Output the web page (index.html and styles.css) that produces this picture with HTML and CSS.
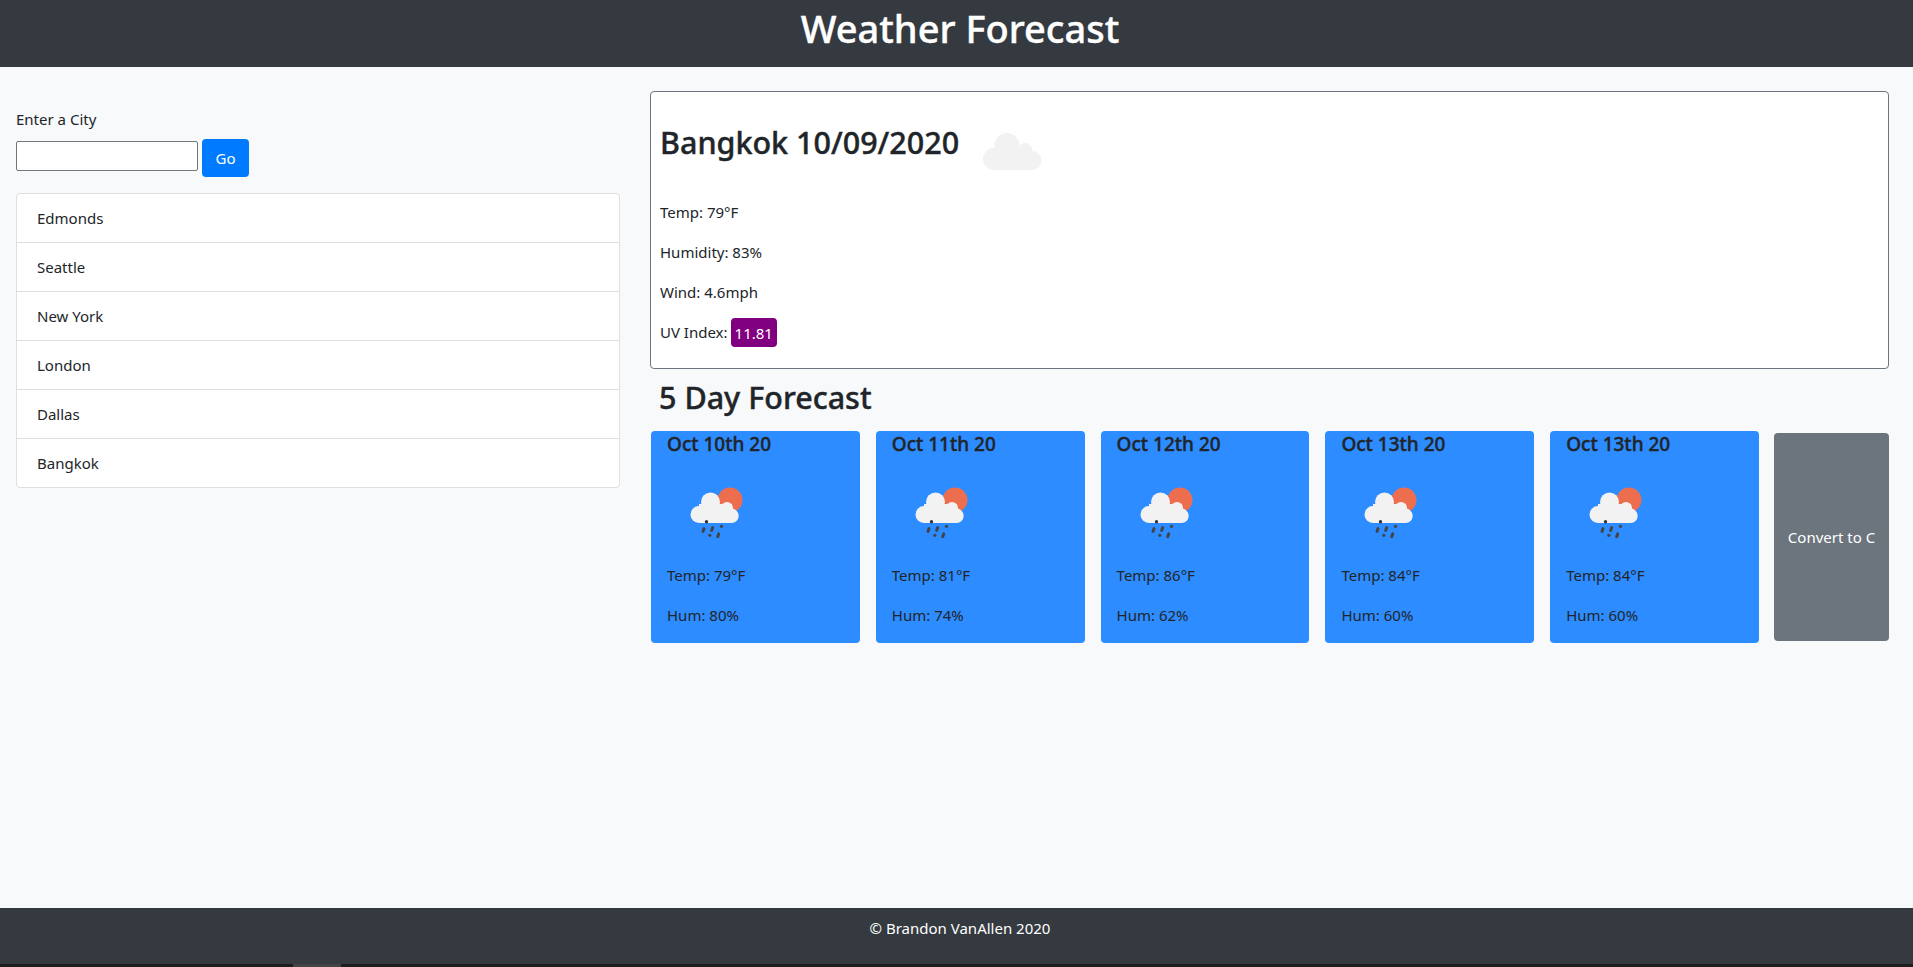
FILE: index.html
```html
<!DOCTYPE html>
<html>
<head>
<meta http-equiv="Content-Type" content="text/html; charset=utf-8"/>
<title>Weather Forecast</title>
<link rel="stylesheet" href="styles.css">
</head>
<body>
<svg class="defs" width="0" height="0">
  <symbol id="icon-rain" viewBox="0 0 100 100">
    <circle cx="63" cy="38" r="12.500" fill="#ed6e4f"/>
    <g fill="#f2f2f2">
      <circle cx="43.500" cy="40" r="9.500"/>
      <circle cx="60" cy="46" r="6"/>
      <circle cx="32" cy="52.500" r="8.500"/>
      <circle cx="64.500" cy="53.800" r="7.200"/>
      <rect x="32" y="42" width="33" height="19"/>
    </g>
    <g fill="#444">
      <circle cx="39.500" cy="59.700" r="1.700" fill="#333"/>
      <rect x="35" y="65" width="3" height="6" rx="1.500" transform="rotate(20 36.500 68)"/>
      <rect x="43.700" y="64" width="3" height="6" rx="1.500" transform="rotate(20 45.200 67)"/>
      <circle cx="54.500" cy="64.300" r="1.600"/>
      <circle cx="42.800" cy="73.300" r="1.600"/>
      <rect x="49.700" y="70.300" width="3" height="6" rx="1.500" transform="rotate(20 51.200 73.300)"/>
    </g>
  </symbol>
  <symbol id="icon-cloud" viewBox="0 0 100 100">
    <g fill="#f2f2f2">
      <circle cx="45" cy="44.500" r="12.500"/>
      <circle cx="63" cy="49" r="7"/>
      <circle cx="32" cy="58" r="11"/>
      <circle cx="70" cy="59.500" r="9.500"/>
      <rect x="32" y="47" width="38" height="22"/>
    </g>
  </symbol>
</svg>

<header class="site-header">
  <h1>Weather Forecast</h1>
</header>

<main class="page">
  <section class="search-col">
    <label class="city-label" for="city">Enter a City</label>
    <div class="city-form">
      <input class="city-input" id="city" type="text">
      <button class="btn-go" type="button">Go</button>
    </div>
    <ul class="city-list">
      <li>Edmonds</li>
      <li>Seattle</li>
      <li>New York</li>
      <li>London</li>
      <li>Dallas</li>
      <li>Bangkok</li>
    </ul>
  </section>

  <section class="weather-col">
    <div class="today">
      <div class="today-head">
        <h2>Bangkok 10/09/2020</h2>
        <svg class="icon"><use href="#icon-cloud"/></svg>
      </div>
      <p>Temp: 79°F</p>
      <p>Humidity: 83%</p>
      <p>Wind: 4.6mph</p>
      <p class="uv">UV Index: <span class="uv-badge">11.81</span></p>
    </div>

    <h2 class="forecast-title">5 Day Forecast</h2>
    <div class="forecast-row">
      <div class="day">
        <h5>Oct 10th 20</h5>
        <svg class="icon"><use href="#icon-rain"/></svg>
        <p>Temp: 79°F</p>
        <p>Hum: 80%</p>
      </div>
      <div class="day">
        <h5>Oct 11th 20</h5>
        <svg class="icon"><use href="#icon-rain"/></svg>
        <p>Temp: 81°F</p>
        <p>Hum: 74%</p>
      </div>
      <div class="day">
        <h5>Oct 12th 20</h5>
        <svg class="icon"><use href="#icon-rain"/></svg>
        <p>Temp: 86°F</p>
        <p>Hum: 62%</p>
      </div>
      <div class="day">
        <h5>Oct 13th 20</h5>
        <svg class="icon"><use href="#icon-rain"/></svg>
        <p>Temp: 84°F</p>
        <p>Hum: 60%</p>
      </div>
      <div class="day">
        <h5>Oct 13th 20</h5>
        <svg class="icon"><use href="#icon-rain"/></svg>
        <p>Temp: 84°F</p>
        <p>Hum: 60%</p>
      </div>
      <button class="btn-convert" type="button">Convert to C</button>
    </div>
  </section>
</main>

<footer class="site-footer">© Brandon VanAllen 2020</footer>
<div class="taskbar"><span class="taskbar-tab"></span></div>
</body>
</html>
```

FILE: styles.css
```css
* {
   box-sizing: border-box;
}

body {
   display: flex;
   flex-direction: column;
   height: 100vh;
   margin: 0;
   overflow: hidden;
   font-family: "Noto Sans", "Open Sans", sans-serif;
   font-size: 15px;
   line-height: 24px;
   color: #212529;
   background-color: #f8f9fa;
}

.defs {
   position: absolute;
}

h1, h2, h5, p, ul {
   margin: 0;
   padding: 0;
}

h1, h2, h5 {
   font-weight: 500;
   -webkit-text-stroke: 0.4px;
}

.icon {
   display: block;
   flex: none;
   width: 100px;
   height: 100px;
}

.site-header {
   flex: none;
   height: 67px;
   padding-left: 7px;
   text-align: center;
   color: #fff;
   background-color: #343a40;
}

.site-header h1 {
   font-size: 38px;
   line-height: 57px;
}

.page {
   flex: 1;
   display: flex;
   padding: 24px 24px 0 16px;
}

.search-col {
   flex: none;
   width: 604px;
   margin-right: 30px;
}

.city-label {
   display: block;
   margin-top: 16px;
}

.city-form {
   display: flex;
   align-items: center;
   gap: 4px;
   margin-top: 8px;
}

.city-input {
   width: 182px;
   height: 30px;
   margin-bottom: 4px;
   padding: 1px 2px;
   border: 1px solid #767676;
   border-radius: 2px;
   background-color: #fff;
}

.btn-go {
   width: 47px;
   height: 38px;
   padding: 0;
   border: 0;
   border-radius: 4px;
   font: inherit;
   color: #fff;
   background-color: #007bff;
}

.city-list {
   margin-top: 16px;
   list-style: none;
   border: 1px solid #dfdfdf;
   border-radius: 4px;
   background-color: #fff;
}

.city-list li {
   height: 49px;
   padding: 12px 20px;
   border-top: 1px solid #dfdfdf;
}

.city-list li:first-child {
   height: 48px;
   border-top: 0;
}

.weather-col {
   flex: 1;
   min-width: 0;
}

.today {
   height: 278px;
   padding: 9px 9px 0;
   border: 1px solid #6c757d;
   border-radius: 4px;
   background-color: #fff;
}

.today-head {
   display: flex;
   gap: 5px;
   height: 100px;
   margin-bottom: -1px;
}

.today-head h2 {
   width: 297px;
   margin-top: 22px;
   font-size: 30.500px;
   line-height: 38px;
   white-space: nowrap;
}

.today p {
   margin-bottom: 16px;
}

.today .uv {
   display: flex;
   align-items: center;
   gap: 3px;
   height: 24px;
   margin-bottom: 0;
}

.uv-badge {
   height: 29px;
   padding: 3px 4px 2px;
   border-radius: 4px;
   color: #fff;
   background-color: #800080;
}

.forecast-title {
   margin: 9px 0 15px 9px;
   font-size: 30.500px;
   line-height: 38px;
}

.forecast-row {
   display: flex;
   gap: 16px;
   padding-left: 1px;
}

.day {
   flex: 0 0 208.800px;
   height: 212px;
   padding: 1px 16px 0;
   border-radius: 4px;
   background-color: #2d8cff;
}

.day h5 {
   font-size: 19px;
   line-height: 24px;
}

.day .icon {
   margin: 6px 0 1px;
}

.day p {
   margin-bottom: 16px;
}

.btn-convert {
   flex: 0 0 115px;
   height: 208px;
   margin: 2px 0 0 -1px;
   padding: 0;
   border: 0;
   border-radius: 4px;
   font: inherit;
   color: #fff;
   background-color: #6c757d;
}

.site-footer {
   flex: none;
   height: 56px;
   padding: 8px 0 0 7px;
   text-align: center;
   color: #fff;
   background-color: #343a40;
}

.taskbar {
   flex: none;
   height: 3px;
   padding-left: 293px;
   background-color: #1d1d1d;
}

.taskbar-tab {
   display: block;
   width: 48px;
   height: 3px;
   background-color: #444;
}
```
